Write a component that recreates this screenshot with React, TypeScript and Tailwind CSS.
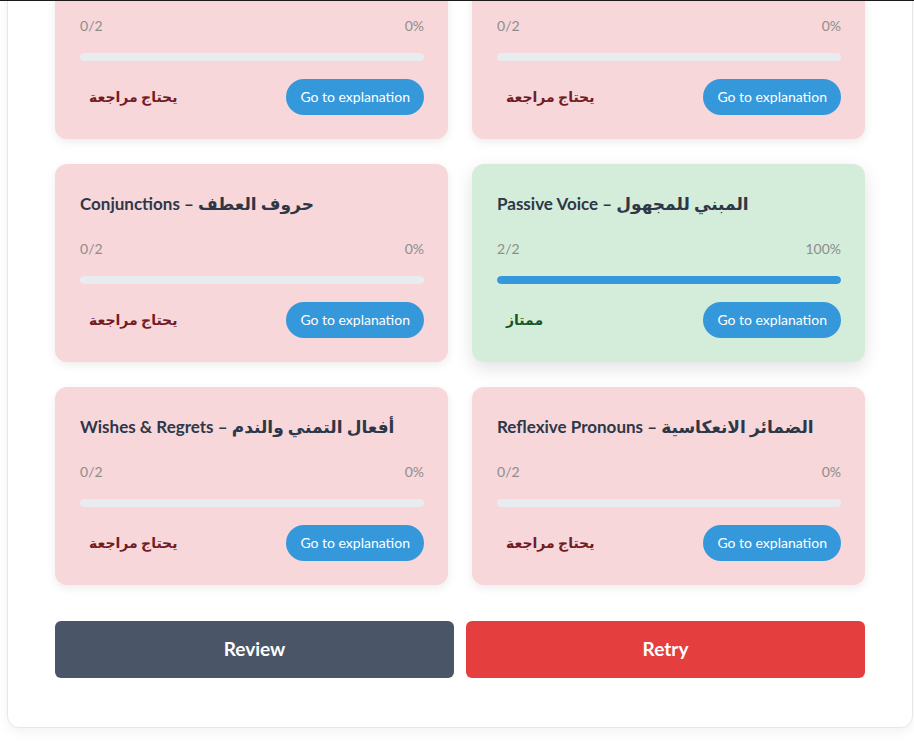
import React from "react";

type Topic = {
	title: string;
	done: number;
	total: number;
	good: boolean;
};

const topics: Topic[] = [
	{ title: "Conditionals – الجمل الشرطية", done: 0, total: 2, good: false },
	{ title: "Modal Verbs – الأفعال الناقصة", done: 0, total: 2, good: false },
	{ title: "Conjunctions – حروف العطف", done: 0, total: 2, good: false },
	{ title: "Passive Voice – المبني للمجهول", done: 2, total: 2, good: true },
	{ title: "Wishes & Regrets – أفعال التمني والندم", done: 0, total: 2, good: false },
	{ title: "Reflexive Pronouns – الضمائر الانعكاسية", done: 0, total: 2, good: false },
];

const TopicCard = ({ topic }: { topic: Topic }) => {
	const pct = Math.round((topic.done / topic.total) * 100);

	return (
		<div
			className={`rounded-xl pl-[25px] pr-6 pt-[26px] pb-6 ${
				topic.good
					? "bg-[#d4edda] shadow-[0_6px_18px_rgba(0,0,0,0.12)]"
					: "bg-[#f8d7da] shadow-[0_3px_10px_rgba(0,0,0,0.08)]"
			}`}
		>
			<h3 className="text-[17px] leading-7 font-bold text-[#2d3748]">
				{topic.title}
			</h3>
			<div className="mt-[21px] flex items-center justify-between text-sm leading-5 text-[#8d8d8d]">
				<span>
					{topic.done}/{topic.total}
				</span>
				<span>{pct}%</span>
			</div>
			<div className="mt-[17px] h-2 w-full overflow-hidden rounded-full bg-[#e9ecef]">
				<div
					className="h-full rounded-full bg-[#3498db]"
					style={{ width: `${pct}%` }}
				/>
			</div>
			<div className="mt-[18px] flex items-center justify-between">
				<span
					className={`px-[9px] text-sm font-bold ${
						topic.good ? "text-[#155724]" : "text-[#721c24]"
					}`}
				>
					{topic.good ? "ممتاز" : "يحتاج مراجعة"}
				</span>
				<button className="h-9 rounded-full bg-[#3498db] px-[14px] text-sm text-white">
					Go to explanation
				</button>
			</div>
		</div>
	);
};

export default function App() {
	return (
		<div className="h-[749px] overflow-hidden bg-white font-['Lato','DejaVu_Sans',sans-serif]">
			<div className="relative z-10 h-px bg-[#1a1a1a]" />
			<div className="mt-[-108px] pl-[7px] pr-[1px]">
				<div className="rounded-xl border border-gray-200 bg-white px-[47px] pt-[47px] pb-[49px] shadow-[0_4px_12px_rgba(0,0,0,0.05)]">
					<div className="grid grid-cols-2 gap-x-6 gap-y-[25px]">
						{topics.map((t) => (
							<TopicCard key={t.title} topic={t} />
						))}
					</div>
					<div className="mt-[36px] flex gap-3">
						<button className="h-[57px] flex-1 rounded-md bg-[#4a5568] text-[19px] font-bold text-white">
							Review
						</button>
						<button className="h-[57px] flex-1 rounded-md bg-[#e53e3e] text-[19px] font-bold text-white">
							Retry
						</button>
					</div>
				</div>
			</div>
		</div>
	);
}
